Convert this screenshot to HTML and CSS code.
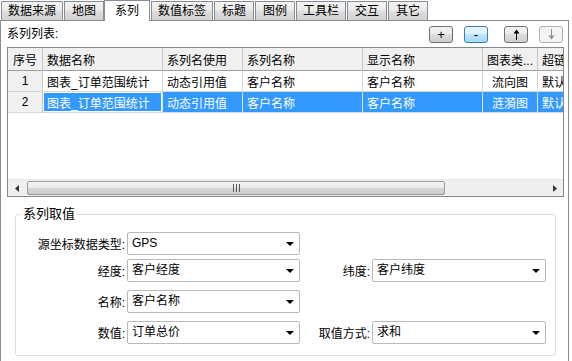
FILE: index.html
```html
<!DOCTYPE html>
<html lang="zh-CN">
<head>
    <meta charset="UTF-8">
    <title>系列</title>
    <link rel="stylesheet" href="styles.css">
</head>
<body>
    <div class="window">
        <div class="tabs">
            <div class="tab">数据来源</div>
            <div class="tab">地图</div>
            <div class="tab active">系列</div>
            <div class="tab">数值标签</div>
            <div class="tab">标题</div>
            <div class="tab">图例</div>
            <div class="tab">工具栏</div>
            <div class="tab">交互</div>
            <div class="tab">其它</div>
        </div>
        <div class="panel">
            <div class="list-head">
                <span class="caption">系列列表:</span>
                <div class="tools">
                    <button class="btn">+</button>
                    <button class="btn hot">-</button>
                    <button class="btn wide-gap">
                        <svg width="7" height="11" viewBox="0 0 7 11"><path d="M3.5 2V11" stroke="#000"/><path d="M0.5 4.5L3.5 0.5L6.5 4.5Z" fill="#000"/></svg>
                    </button>
                    <button class="btn" disabled>
                        <svg width="7" height="11" viewBox="0 0 7 11"><path d="M3.5 0V9" stroke="#8c8c8c"/><path d="M0.5 6.5L3.5 10.5L6.5 6.5Z" fill="#8c8c8c"/></svg>
                    </button>
                </div>
            </div>

            <div class="grid">
                <div class="grid-body">
                    <table>
                        <colgroup>
                            <col class="c-no"><col class="c-name"><col class="c-use"><col class="c-name"><col class="c-name"><col class="c-type"><col class="c-link">
                        </colgroup>
                        <thead>
                            <tr>
                                <th class="center">序号</th>
                                <th>数据名称</th>
                                <th>系列名使用</th>
                                <th>系列名称</th>
                                <th>显示名称</th>
                                <th>图表类...</th>
                                <th>超链接</th>
                            </tr>
                        </thead>
                        <tbody>
                            <tr>
                                <td class="rownum">1</td>
                                <td>图表_订单范围统计</td>
                                <td>动态引用值</td>
                                <td>客户名称</td>
                                <td>客户名称</td>
                                <td class="center">流向图</td>
                                <td>默认</td>
                            </tr>
                            <tr class="selected">
                                <td class="rownum">2</td>
                                <td class="focus">图表_订单范围统计</td>
                                <td>动态引用值</td>
                                <td>客户名称</td>
                                <td>客户名称</td>
                                <td class="center">涟漪图</td>
                                <td>默认</td>
                            </tr>
                        </tbody>
                    </table>
                </div>
                <div class="hscroll">
                    <div class="arrow">
                        <svg width="4" height="7" viewBox="0 0 4 7"><path d="M4 0V7L0 3.5Z" fill="#333"/></svg>
                    </div>
                    <div class="track">
                        <div class="thumb">
                            <svg width="7" height="8" viewBox="0 0 7 8"><path d="M0.5 0V8M3.5 0V8M6.5 0V8" stroke="#555"/></svg>
                        </div>
                    </div>
                    <div class="arrow">
                        <svg width="4" height="7" viewBox="0 0 4 7"><path d="M0 0V7L4 3.5Z" fill="#333"/></svg>
                    </div>
                </div>
            </div>

            <fieldset class="group">
                <legend>系列取值</legend>
                <div class="row">
                    <label class="lbl">源坐标数据类型:</label>
                    <div class="combo">GPS</div>
                </div>
                <div class="row tight">
                    <label class="lbl">经度:</label>
                    <div class="combo">客户经度</div>
                    <label class="lbl lbl2">纬度:</label>
                    <div class="combo wide">客户纬度</div>
                </div>
                <div class="row">
                    <label class="lbl">名称:</label>
                    <div class="combo">客户名称</div>
                </div>
                <div class="row">
                    <label class="lbl">数值:</label>
                    <div class="combo">订单总价</div>
                    <label class="lbl lbl2">取值方式:</label>
                    <div class="combo wide">求和</div>
                </div>
            </fieldset>
        </div>
    </div>
</body>
</html>
```

FILE: styles.css
```css
* {
    margin: 0;
    padding: 0;
    box-sizing: border-box;
}
body {
    background: #fff;
    font-family: "Liberation Sans", "Noto Sans CJK SC", sans-serif;
    font-size: 12px;
    color: #000;
}
.window {
    width: 569px;
}

/* tab strip */
.tabs {
    display: flex;
    align-items: flex-end;
    height: 20px;
    padding-left: 1px;
    position: relative;
    z-index: 1;
}
.tab {
    min-width: 40px;
    height: 19px;
    line-height: 18px;
    padding: 0 6px;
    margin-right: 1px;
    border: 1px solid #898c95;
    border-bottom: none;
    background: linear-gradient(#f3f3f3, #ebebeb 45%, #dddddd 55%, #d2d2d2);
    text-align: center;
    white-space: nowrap;
}
.tab.active {
    height: 21px;
    line-height: 20px;
    margin: 0 -1px -1px -1px;
    padding: 0 10px;
    background: #fff;
    position: relative;
    z-index: 2;
}
.tab.active + .tab {
    margin-left: 2px;
}

/* panel */
.panel {
    height: 345px;
    border: 1px solid #898c95;
    padding: 0 4px 0 6px;
    background: #fff;
}
.list-head {
    display: flex;
    justify-content: space-between;
    align-items: center;
    height: 17px;
    margin-top: 5px;
    margin-bottom: 4px;
}
.caption {
    line-height: 17px;
}
.tools {
    display: flex;
    gap: 11px;
    margin-right: 1px;
}
.btn {
    width: 24px;
    height: 17px;
    border: 1px solid #707070;
    border-radius: 3px;
    background: linear-gradient(#f2f2f2, #ebebeb 50%, #dddddd 50%, #cfcfcf);
    font-family: "Liberation Sans", sans-serif;
    font-size: 13px;
    line-height: 14px;
    color: #000;
    display: flex;
    align-items: center;
    justify-content: center;
}
.btn.hot {
    border-color: #3c7fb1;
    background: linear-gradient(#eaf6fd, #d9f0fc 50%, #bee6fd 50%, #a7d9f5);
}
.btn.wide-gap {
    margin-left: 5px;
}
.btn:disabled {
    border-color: #adb2b5;
    background: #f4f4f4;
}

/* series grid */
.grid {
    border: 1px solid #828790;
    height: 150px;
    background: #fff;
}
.grid-body {
    height: 131px;
    overflow: hidden;
}
table {
    table-layout: fixed;
    width: 610px;
    border-collapse: separate;
    border-spacing: 0;
}
.c-no { width: 35px; }
.c-name { width: 120px; }
.c-use { width: 80px; }
.c-type { width: 55px; }
.c-link { width: 80px; }
th, td {
    padding: 0 4px;
    text-align: left;
    font-weight: normal;
    white-space: nowrap;
    overflow: hidden;
    border-right: 1px solid #d5d5d5;
    border-bottom: 1px solid #d5d5d5;
}
th {
    height: 23px;
    background: #f0f0f0;
    border-bottom-color: #a0a0a0;
    border-right-color: #c5c5c5;
    text-overflow: clip;
}
td {
    height: 21px;
}
.center {
    text-align: center;
}
td.rownum {
    background: #f0f0f0;
    text-align: center;
    border-right-color: #c5c5c5;
}
tr.selected td {
    background: #3399ff;
    color: #fff;
    border-right-color: #e3e3e3;
}
tr.selected td.rownum {
    background: #f0f0f0;
    color: #000;
    border-right-color: #c5c5c5;
}
tr.selected td.focus {
    box-shadow: inset 0 0 0 1px #fff;
}

/* horizontal scroll bar */
.hscroll {
    display: flex;
    height: 17px;
    background: #efefef;
    border-top: 1px solid #e6e6e6;
}
.arrow {
    width: 17px;
    display: flex;
    align-items: center;
    justify-content: center;
}
.track {
    flex: 1;
    padding: 1px 0 1px 2px;
}
.thumb {
    width: 418px;
    height: 100%;
    border: 1px solid #9a9a9a;
    border-radius: 2px;
    background: linear-gradient(#f4f4f4, #e9e9e9 50%, #d8d8d8 50%, #cdcdcd);
    display: flex;
    align-items: center;
    justify-content: center;
}

/* value group */
.group {
    margin: 10px 8px 0 8px;
    border: 1px solid #d5dfe5;
    border-radius: 3px;
    padding: 11px 5px 11px 5px;
}
.group legend {
    padding: 0 2px;
    line-height: 14px;
    font-size: 13px;
}
.row {
    display: flex;
    align-items: center;
    height: 23px;
    margin-top: 8px;
}
.row:first-of-type {
    margin-top: 0;
}
.row.tight {
    margin-top: 4px;
}
.lbl {
    width: 106px;
    padding-right: 2px;
    text-align: right;
    white-space: nowrap;
}
.lbl2 {
    width: 72px;
}
.combo {
    width: 173px;
    height: 23px;
    border: 1px solid #b9b9b9;
    border-radius: 2px;
    padding-left: 4px;
    line-height: 21px;
    background: #fff url("data:image/svg+xml;utf8,<svg xmlns='http://www.w3.org/2000/svg' width='8' height='4'><path d='M0 0H8L4 4Z' fill='black'/></svg>") no-repeat right 5px center;
}
.combo.wide {
    width: 174px;
}
```
